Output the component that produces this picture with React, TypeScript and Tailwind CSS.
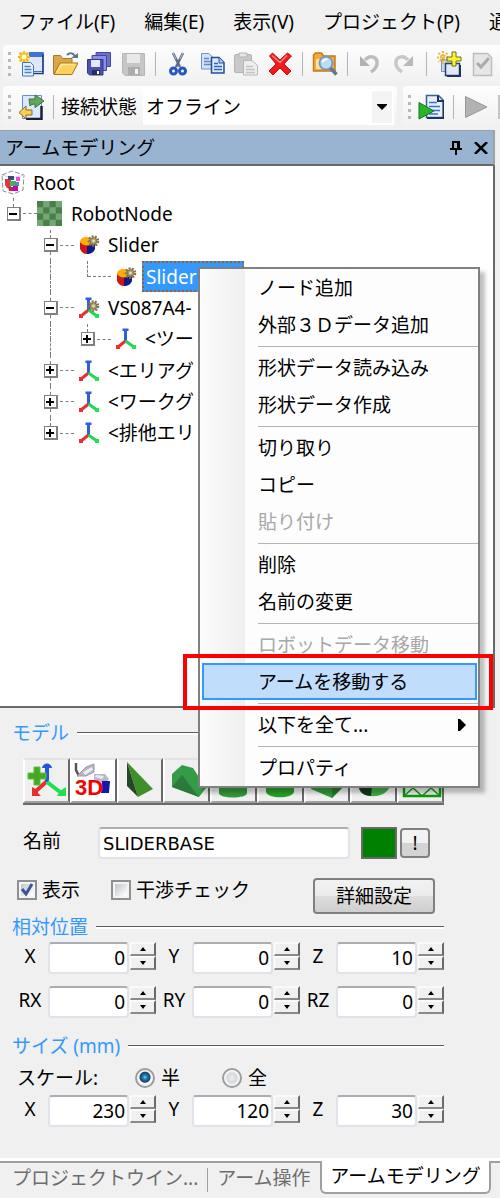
import type { ReactNode } from 'react';

/* ---------- toolbar icons ---------- */

function Svg({ children }: { children: ReactNode }) {
  return (
    <svg width="26" height="26" viewBox="0 0 26 26" className="shrink-0" aria-hidden="true">
      {children}
    </svg>
  );
}

const NewWindowIcon = () => (
  <Svg>
    <rect x="7" y="1.500" width="18" height="19" fill="#dce8fa" stroke="#4a74b8" />
    <path d="M7 1h18.500v5H7z" fill="#3f74d6" />
    <path d="M25 3v19.500H12" fill="none" stroke="#1f3f85" strokeWidth="1.600" />
    <path d="M1 1h10v10H1z" fill="#f7dc7a" />
    <path d="M6 0v12M0 6h12M2 2l8 8M10 2l-8 8" stroke="#efb61f" strokeWidth="1.800" />
    <circle cx="6" cy="6" r="2.500" fill="#fffac8" />
    <path d="M4.500 11.500h8l3 3V25h-11z" fill="#e6effc" stroke="#4673b5" />
    <path d="M6.500 15.500h6M6.500 18.500h7M6.500 21.500h7" stroke="#4f80c4" strokeWidth="1.500" />
  </Svg>
);

const OpenIcon = () => (
  <Svg>
    <path d="M1.500 23V4.500h7l2 3H20V14" fill="#dba646" stroke="#a97c2c" />
    <path d="M2 23.500 8 12h18l-6 11.500z" fill="#ffd05a" stroke="#a97418" />
    <path d="M5 21 9.500 13.500H22" fill="none" stroke="#ffe9a8" strokeWidth="1.500" />
    <path d="M15 4c3-3 7-2 8 2" fill="none" stroke="#5c7391" strokeWidth="2" />
    <path d="M19 7h7V2z" fill="#5c7391" />
  </Svg>
);

const SaveAllIcon = () => (
  <Svg>
    <path d="M10 1.500h14.500v14H10z" fill="#6a70cc" stroke="#4448a4" />
    <path d="M6 4.500h14.500v15H6z" fill="#8a90e0" stroke="#4448a4" />
    <path d="M1.500 8.500H17V24H3.500l-2-2z" fill="#4a50b8" stroke="#34398c" />
    <path d="M5 9h9v7H5z" fill="#e4e9fd" />
    <path d="M6 19h8v5H6z" fill="#2a2f55" />
    <path d="M11 20h2v3h-2z" fill="#fff" />
  </Svg>
);

const SaveIcon = () => (
  <Svg>
    <path d="M2.500 2.500h22v22H5l-2.500-2.500z" fill="#c6c6c6" stroke="#b6b6b6" />
    <path d="M7 3h13v9H7z" fill="#e9e9e9" />
    <path d="M8 16h12v8H8z" fill="#adadad" />
    <path d="M15 18h3v5h-3z" fill="#f5f5f5" />
  </Svg>
);

const CutIcon = () => (
  <Svg>
    <path d="m8 2 7 14M18 2l-7 14" stroke="#5d6d86" strokeWidth="2.600" />
    <path d="m8 2 3 6M18 2l-3 6" stroke="#9fafc4" strokeWidth="1.200" />
    <circle cx="8.500" cy="20" r="3" fill="none" stroke="#2457c4" strokeWidth="3" />
    <circle cx="17.500" cy="20" r="3" fill="none" stroke="#2457c4" strokeWidth="3" />
  </Svg>
);

const CopyIcon = () => (
  <Svg>
    <path d="M2.500 2.500H10l4 4V18H2.500z" fill="#d5e3f8" stroke="#6e93c9" />
    <path d="M5 7.500h5M5 10.500h7M5 13.500h7" stroke="#5f88c6" strokeWidth="1.500" />
    <path d="M12.500 6.500H20l5 5V22H12.500z" fill="#dbe8fd" stroke="#234c9c" strokeWidth="1.500" />
    <path d="M20 6.500V12h5" fill="#b6cbed" stroke="#234c9c" />
    <path d="M15 12.500h4M15 15.500h8M15 18.500h8" stroke="#3565b5" strokeWidth="1.500" />
  </Svg>
);

const PasteIcon = () => (
  <Svg>
    <rect x="1.500" y="3.500" width="17" height="18" rx="1.500" fill="#c9c9c9" stroke="#b4b4b4" />
    <path d="M6 2h8v4H6z" fill="#e6e6e6" stroke="#b4b4b4" />
    <path d="M10.500 9.500H19l5.500 5V24h-14z" fill="#eee" stroke="#b8b8b8" />
    <path d="M13 15.500h7M13 18.500h9M13 21.500h9" stroke="#c2c2c2" strokeWidth="1.500" />
  </Svg>
);

const DeleteIcon = () => (
  <Svg>
    <path d="m2.500 5 3-3 7.500 7 7.500-7 4 3-7.500 8 7 7-4 4-7-7-7 7-4-4 7-7z" fill="#ee1c1c" stroke="#d01010" />
    <path d="m5 4.500 8 7 7-7" fill="none" stroke="#ff8080" strokeWidth="1.500" />
  </Svg>
);

const FindIcon = () => (
  <Svg>
    <path d="M1.500 20V4l2-2h6l2 3H23v15z" fill="#f5a93a" stroke="#c67a12" strokeWidth="1.500" />
    <path d="M4 8h17v10H4z" fill="#ffe2a0" />
    <circle cx="14" cy="12" r="6.500" fill="#bcdcfb" stroke="#7d96b8" strokeWidth="2" />
    <path d="M10.500 11c1-2.500 3.500-3 5-2.500" fill="none" stroke="#fff" strokeWidth="2" />
    <path d="m18.500 17 6 6.500" stroke="#5e7898" strokeWidth="3.500" />
  </Svg>
);

const UndoIcon = () => (
  <Svg>
    <path d="M8 9c5-6 13-3 12 4-.5 4-3 6-6 8" fill="none" stroke="#bdbdbd" strokeWidth="3.500" />
    <path d="M3 5v10h10z" fill="#b0b0b0" />
  </Svg>
);

const RedoIcon = () => (
  <Svg>
    <path d="M17 9C12 3 4 6 5 13c.5 4 3 6 6 8" fill="none" stroke="#c8c8c8" strokeWidth="3.500" />
    <path d="M22 5v10H12z" fill="#b8b8b8" />
  </Svg>
);

const AddItemIcon = () => (
  <Svg>
    <path d="M5.500 8.500h14v12h-14z" fill="#c8d7ee" stroke="#7893bd" />
    <path d="M9.500 12.500h14v12h-14z" fill="#dfe9f7" stroke="#25406f" strokeWidth="1.500" />
    <path d="M24 14v11H11" fill="none" stroke="#1f3358" strokeWidth="2" />
    <path d="M7 0v13M1 6.500h12M2.500 2l9 9M11.500 2l-9 9" stroke="#e8b93a" strokeWidth="2" strokeDasharray="2 1" />
    <path d="M16 1h4v5h5v4h-5v5h-4v-5h-5V6h5z" fill="#fff23a" stroke="#75700f" />
  </Svg>
);

const CheckDocIcon = () => (
  <Svg>
    <path d="M3.500 2.500h14l4 4v18h-18z" fill="#e6e6e6" stroke="#bdbdbd" strokeWidth="1.500" />
    <path d="m7 12 4 4 8-9" fill="none" stroke="#ababab" strokeWidth="3" />
  </Svg>
);

const TransferIcon = () => (
  <Svg>
    <path d="M4.500 1.500h19v23h-19z" fill="#dce9fc" stroke="#6c8fca" />
    <path d="M23.500 12v13H8" fill="none" stroke="#18203a" strokeWidth="2.500" />
    <path d="M11 5h6V1l9 6-9 6.500V10c-3 0-4 1-5 2z" fill="#62a85c" stroke="#3f6e3d" />
    <path d="M14 16H8v-4l-7 6.500L8 25v-4h6z" fill="#f5cf58" stroke="#8d6c1c" />
  </Svg>
);

const RunDocIcon = () => (
  <Svg>
    <path d="M8.500 1.500h12l5 5v17h-17z" fill="#e7f0fd" stroke="#3a5c99" strokeWidth="1.500" />
    <path d="M20 1.500V7h5.500v17H9" fill="none" stroke="#1d3461" strokeWidth="2" />
    <path d="M11 8.500h8M11 12.500h11M11 16.500h11M11 20h9" stroke="#3a6fd8" strokeWidth="1.500" />
    <path d="M1 8.500 16 17 1 25z" fill="#28b428" stroke="#117a16" />
  </Svg>
);

const PlayIcon = () => (
  <Svg>
    <path d="M2.500 2.500 24 13 2.500 23.500z" fill="#b2b2b2" stroke="#989898" />
  </Svg>
);

/* ---------- tree icons ---------- */

const RootIcon = () => (
  <svg width="25" height="25" viewBox="0 0 25 25" aria-hidden="true">
    <path d="M2 5 12 1l12 4-1 15-10 4-10-3z" fill="#fff" stroke="#8f8f8f" strokeDasharray="5 2" />
    <path d="m2 5 10 3 12-3" fill="none" stroke="#d2d2d2" />
    <path d="M5 9h6v9H7l-2-3z" fill="#e3343f" />
    <path d="M8 6h6v4H8z" fill="#3d4a78" />
    <path d="M10 11h6v5h-6z" fill="#3fb55b" />
    <path d="M15 12h4v4h-4z" fill="#4a90a4" />
    <path d="M16 7h4v4h-4z" fill="#e24be6" />
    <path d="M8 17h6v4H9z" fill="#c02648" />
    <path d="M13 16h5v5h-5z" fill="#c800c8" />
  </svg>
);

const FloorIcon = () => (
  <svg width="25" height="25" viewBox="0 0 8 8" aria-hidden="true">
    <path d="M0 0h8v8H0z" fill="#73a873" />
    <path d="M0 0h2v2H0zM4 0h2v2H4zM2 2h2v2H2zM6 2h2v2H6zM0 4h2v2H0zM4 4h2v2H4zM2 6h2v2H2zM6 6h2v2H6z" fill="#4a7f4c" />
  </svg>
);

const Gear = () => (
  <>
    <circle cx="15.500" cy="7" r="4.600" fill="none" stroke="#85754a" strokeWidth="2.400" strokeDasharray="2 1.200" />
    <circle cx="15.500" cy="7" r="3.400" fill="#a8986a" stroke="#85754a" />
    <circle cx="15.500" cy="7" r="1.400" fill="#e9dfb8" />
  </>
);

const PartIcon = () => (
  <svg width="22" height="22" viewBox="0 0 22 22" aria-hidden="true">
    <path d="M2 8v7c1 3 4 5 7 5V10z" fill="#cf1717" />
    <path d="M9 10v10c4 0 7-2 8-5V8z" fill="#161a86" />
    <path d="M2 8c0-5 7-6 10-4l4 5c-2 3-11 4-14-1z" fill="#ffae08" />
    <Gear />
  </svg>
);

const AxesIcon = ({ gear = false }: { gear?: boolean }) => (
  <svg width="22" height="24" viewBox="0 0 22 24" aria-hidden="true">
    <path d="M10.500 2v12" stroke="#2f5fe0" strokeWidth="3" />
    <path d="M8.500 4V2.500h4V4" fill="none" stroke="#2f5fe0" strokeWidth="2" />
    <path d="M10.500 14 3 20" stroke="#e03232" strokeWidth="3" />
    <path d="m10.500 14 8.500 6" stroke="#21d655" strokeWidth="3" />
    <rect x="1" y="18" width="4" height="4" fill="#ec3030" />
    <rect x="17" y="18" width="4" height="4" fill="#21e255" />
    {gear && (
      <g transform="translate(0 3)">
        <Gear />
      </g>
    )}
  </svg>
);

/* ---------- toolbar parts ---------- */

function ToolButton({ label, children }: { label: string; children: ReactNode }) {
  return (
    <button type="button" aria-label={label} className="flex h-9 w-[34px] shrink-0 items-center justify-center">
      {children}
    </button>
  );
}

const Divider = () => (
  <span className="flex w-[11px] shrink-0 justify-center">
    <span className="h-6 w-px bg-[#b4b4b4]" />
  </span>
);

const Grip = () => (
  <span className="flex w-[3px] shrink-0 flex-col gap-1">
    <span className="h-[3px] bg-[#b9b9b9]" />
    <span className="h-[3px] bg-[#b9b9b9]" />
    <span className="h-[3px] bg-[#b9b9b9]" />
    <span className="h-[3px] bg-[#b9b9b9]" />
  </span>
);

/* ---------- tree ---------- */

type Cell = { box?: '+' | '-'; up?: boolean; down?: boolean; branch?: boolean };

const pass: Cell = { up: true, down: true };
const none: Cell = {};

const rows: { cells: Cell[]; icon: ReactNode; text: string; selected?: boolean }[] = [
  { cells: [{ box: '-', up: true, branch: true }], icon: <FloorIcon />, text: 'RobotNode' },
  { cells: [none, { box: '-', up: true, down: true, branch: true }], icon: <PartIcon />, text: 'Slider' },
  { cells: [none, pass, { up: true, branch: true }], icon: <PartIcon />, text: 'Slider', selected: true },
  { cells: [none, { box: '-', up: true, down: true, branch: true }], icon: <AxesIcon gear />, text: 'VS087A4-' },
  { cells: [none, pass, { box: '+', up: true, branch: true }], icon: <AxesIcon />, text: '<ツー' },
  { cells: [none, { box: '+', up: true, down: true, branch: true }], icon: <AxesIcon />, text: '<エリアグ' },
  { cells: [none, { box: '+', up: true, down: true, branch: true }], icon: <AxesIcon />, text: '<ワークグ' },
  { cells: [none, { box: '+', up: true, branch: true }], icon: <AxesIcon />, text: '<排他エリ' },
];

function TreeCell({ cell }: { cell: Cell }) {
  return (
    <span className="flex w-[37px] shrink-0 items-stretch pl-[6px]">
      <span className="flex w-[15px] flex-col items-center">
        <span className={cell.up ? 'flex-1 border-l border-dashed border-[#7c7c7c]' : 'flex-1'} />
        {cell.box && (
          <button
            type="button"
            aria-label={cell.box === '+' ? '展開' : '折りたたみ'}
            className="flex size-[14px] items-center justify-center border border-r-2 border-b-2 border-[#808080] bg-white"
          >
            <svg width="8" height="8" viewBox="0 0 8 8" aria-hidden="true">
              <path d={cell.box === '+' ? 'M0 3h8v2H0zM3 0h2v8H3z' : 'M0 3h8v2H0z'} fill="#000" />
            </svg>
          </button>
        )}
        <span className={cell.down ? 'flex-1 border-l border-dashed border-[#7c7c7c]' : 'flex-1'} />
      </span>
      {cell.branch && (
        <span
          className={
            cell.box
              ? 'ml-[2px] flex-1 self-center border-t border-dashed border-[#7c7c7c]'
              : '-ml-[7px] flex-1 self-center border-t border-dashed border-[#7c7c7c]'
          }
        />
      )}
    </span>
  );
}

function Tree() {
  return (
    <ul className="grid h-[282px] auto-rows-fr">
      <li className="flex items-center gap-2">
        <RootIcon />
        <span>Root</span>
      </li>
      {rows.map((row, i) => (
        <li key={i} className="flex items-stretch whitespace-nowrap">
          {row.cells.map((cell, j) => (
            <TreeCell key={j} cell={cell} />
          ))}
          <span className={row.cells.length === 1 ? 'flex w-[31px] shrink-0 items-center' : 'flex w-[31px] shrink-0 items-center pl-[4px]'}>{row.icon}</span>
          <span
            className={
              row.selected
                ? 'flex w-[102px] items-center border-2 border-dotted border-[#a85c10] bg-[#3399ff] pl-[2px] text-white'
                : 'flex items-center pl-[3px]'
            }
          >
            {row.text}
          </span>
        </li>
      ))}
    </ul>
  );
}

/* ---------- context menu ---------- */

type Entry = { text: string; disabled?: boolean; active?: boolean; submenu?: boolean };

const groups: Entry[][] = [
  [{ text: 'ノード追加' }, { text: '外部３Ｄデータ追加' }],
  [{ text: '形状データ読み込み' }, { text: '形状データ作成' }],
  [{ text: '切り取り' }, { text: 'コピー' }, { text: '貼り付け', disabled: true }],
  [{ text: '削除' }, { text: '名前の変更' }],
  [{ text: 'ロボットデータ移動', disabled: true }, { text: 'アームを移動する', active: true }],
  [{ text: '以下を全て...', submenu: true }],
  [{ text: 'プロパティ' }],
];

function MenuItem({ entry }: { entry: Entry }) {
  return (
    <button
      type="button"
      role="menuitem"
      disabled={entry.disabled}
      className={
        entry.active
          ? 'relative mr-px ml-[2px] flex h-[37px] items-center border-2 border-[#3399ff] bg-[#c0ddfc] pl-[54px]'
          : entry.disabled
            ? 'flex h-[37px] items-center pl-[58px] text-[#a8a8a8]'
            : 'flex h-[37px] items-center pl-[58px]'
      }
    >
      {entry.text}
      {entry.submenu && (
        <svg width="8" height="12" viewBox="0 0 8 12" className="mr-3 ml-auto" aria-hidden="true">
          <path d="M0 0h2l6 6-6 6H0z" fill="#000" />
        </svg>
      )}
      {entry.active && <span className="absolute -top-[11px] -right-[18px] -bottom-[12px] -left-[21px] border-4 border-[#ff0000]" />}
    </button>
  );
}

function ContextMenu() {
  return (
    <div
      role="menu"
      className="absolute top-[267px] left-[198px] w-[282px] border-2 border-[#808080] bg-[linear-gradient(to_right,#fcfcfc_0,#efefef_45px,#fdfdfd_45px)] shadow-[5px_5px_4px_rgba(0,0,0,0.25)]"
    >
      {groups.map((group, i) => (
        <div key={i} className="flex flex-col">
          {i > 0 && <div role="separator" className="mt-[3px] mb-[2px] ml-[58px] h-px bg-[#b4b4b4]" />}
          {group.map((entry) => (
            <MenuItem key={entry.text} entry={entry} />
          ))}
        </div>
      ))}
    </div>
  );
}

/* ---------- form ---------- */

function Legend({ children }: { children: ReactNode }) {
  return (
    <div className="flex h-5 items-center gap-2 text-[#3399ff]">
      <h2 className="whitespace-nowrap">{children}</h2>
      <span className="h-[3px] flex-1 border-t border-[#5c5c5c] bg-white" />
    </div>
  );
}

function Spin({ up }: { up?: boolean }) {
  return (
    <button
      type="button"
      aria-label={up ? '増やす' : '減らす'}
      className="flex h-[14px] items-center justify-center border-t-2 border-r-2 border-b-2 border-l border-t-[#fafafa] border-r-[#696969] border-b-[#8a8a8a] border-l-white bg-[#f0f0f0]"
    >
      <svg width="6" height="4" viewBox="0 0 6 4" aria-hidden="true">
        <path d={up ? 'M0 4 3 0l3 4z' : 'M0 0h6L3 4z'} fill="#000" />
      </svg>
    </button>
  );
}

function NumberField({ label, id, value }: { label: string; id: string; value: string }) {
  return (
    <div className="flex items-start">
      <label htmlFor={id} className="flex h-7 w-9 shrink-0 items-center justify-center">
        {label}
      </label>
      <input
        id={id}
        defaultValue={value}
        inputMode="numeric"
        className="h-8 min-w-0 flex-1 rounded-sm border-2 border-[#e2e3ea] border-t-[#abadb3] bg-white pr-[2px] text-right"
      />
      <div className="flex w-[27px] shrink-0 flex-col pl-px">
        <Spin up />
        <Spin />
      </div>
    </div>
  );
}

function Glyph({ children }: { children: ReactNode }) {
  return (
    <svg width="42" height="42" viewBox="0 0 42 42" className="shrink-0" aria-hidden="true">
      {children}
    </svg>
  );
}

const shapes: { label: string; art: ReactNode; white?: boolean }[] = [
  {
    label: 'ノード追加',
    art: (
      <Glyph>
        <path d="M22 7v15" stroke="#2457d6" strokeWidth="4" />
        <path d="M17 8c1-6 9-6 10 0z" fill="#2457d6" />
        <path d="M21 22 11 31" stroke="#e53030" strokeWidth="4" />
        <path d="M7 27v9h9l-3-3v-3z" fill="#e53030" />
        <path d="m22 22 13 10" stroke="#1fe04f" strokeWidth="4" />
        <path d="M41 27v9h-9l3-5z" fill="#1fe04f" />
        <path d="M9 7h6v6h6v6h-6v6H9v-6H3v-6h6z" fill="#45a828" stroke="#5fc23c" />
      </Glyph>
    ),
  },
  {
    label: '3Dデータ追加',
    white: true,
    art: (
      <Glyph>
        <path d="M4 3v7l3 6" fill="none" stroke="#555" strokeWidth="2.500" />
        <path d="m5 16 9-9 8-3v8l-8 4z" fill="#b4b4c2" stroke="#9a9aa8" />
        <path d="m11 12 9-5 1 3-8 5z" fill="#ececf4" />
        <path d="M22 14h11l4 5-3 4-12-3z" fill="#b9b9c8" />
        <path d="m24 15 8 1-2 3-7-2z" fill="#ebebf3" />
        <path d="M30 21h8l-1 12h-8z" fill="#1717a6" />
        <text x="3" y="35" fontFamily="Liberation Sans, sans-serif" fontSize="22" fontWeight="700" fill="#f40000">
          3D
        </text>
      </Glyph>
    ),
  },
  {
    label: '三角錐',
    art: (
      <Glyph>
        <path d="M8 2 34 29 19 37z" fill="#3d8f28" />
        <path d="M8 2v24l11 11z" fill="#24472a" />
      </Glyph>
    ),
  },
  {
    label: '三角柱',
    art: (
      <Glyph>
        <path d="M6 14 16 5l11 3 13 20-7 9-27-10z" fill="#349b47" />
        <path d="m6 27 10-12 17 22z" fill="#2b7a3c" />
      </Glyph>
    ),
  },
  {
    label: '円柱',
    art: (
      <Glyph>
        <path d="M7 10v23c0 6 28 6 28 0V10z" fill="#349b38" />
        <ellipse cx="21" cy="10" rx="14" ry="4" fill="#5bc45f" />
      </Glyph>
    ),
  },
  {
    label: '球',
    art: (
      <Glyph>
        <path d="M7 12v20c2 7 26 7 28 0V12C35 4 7 4 7 12z" fill="#28a128" />
      </Glyph>
    ),
  },
  {
    label: '直方体',
    art: (
      <Glyph>
        <path d="M5 12 21 5l16 7v15L26 38 5 29z" fill="#349b38" />
        <path d="m26 20 11-8v15L26 38z" fill="#277a2c" />
      </Glyph>
    ),
  },
  {
    label: '円錐',
    art: (
      <Glyph>
        <path d="M21 4 6 28c3 11 25 11 30 0z" fill="#3fae45" />
        <path d="M21 4 6 28c1 5 6 8 12 8z" fill="#14381b" />
      </Glyph>
    ),
  },
  {
    label: 'メッシュ',
    art: (
      <Glyph>
        <path d="M4 5h36v31H4z" fill="none" stroke="#0a9a0a" strokeWidth="2.500" />
        <path d="m4 36 9-8 9 8 9-8 9 8M4 20h36" fill="none" stroke="#0a9a0a" strokeWidth="1.500" />
      </Glyph>
    ),
  },
];

function CheckBox({ id, label, checked }: { id: string; label: string; checked?: boolean }) {
  return (
    <span className="flex h-6 items-center gap-[5px] whitespace-nowrap">
      <span className="grid size-5 place-items-center">
        <input
          id={id}
          type="checkbox"
          defaultChecked={checked}
          className="peer col-start-1 row-start-1 size-5 appearance-none border-2 border-[#8e8f8f] bg-[linear-gradient(135deg,#c6cbd2_20%,#fbfbfb_80%)] outline-2 -outline-offset-4 outline-[#f4f4f4]"
        />
        <svg width="14" height="14" viewBox="0 0 14 14" className="pointer-events-none z-10 col-start-1 row-start-1 hidden peer-checked:block" aria-hidden="true">
          <path d="m2 6 4 5 6-10" fill="none" stroke="#3d5299" strokeWidth="3" />
        </svg>
      </span>
      <label htmlFor={id}>{label}</label>
    </span>
  );
}

function Radio({ id, label, checked }: { id: string; label: string; checked?: boolean }) {
  return (
    <span className="flex items-center gap-[6px]">
      <input
        id={id}
        type="radio"
        name="scale"
        defaultChecked={checked}
        className="size-5 appearance-none rounded-full border-2 border-[#9b9d9d] bg-[radial-gradient(circle,#e9edf0_0,#d5d9dd_5px,#f8f8f8_7px)] checked:bg-[radial-gradient(circle_at_50%_45%,#7fd4f5_0,#1c86b8_2px,#163f66_5px,#f4f4f4_6px)]"
      />
      <label htmlFor={id}>{label}</label>
    </span>
  );
}

/* ---------- page ---------- */

export default function App() {
  return (
    <div className="relative overflow-hidden bg-[#f0f0f0] font-['Noto_Sans','Noto_Sans_CJK_JP',sans-serif] text-[19px] leading-6 text-black">
      <nav className="flex h-[45px] items-center gap-[29px] overflow-hidden pb-[2px] pl-[18px] whitespace-nowrap">
        <button type="button" className="shrink-0">ファイル(F)</button>
        <button type="button" className="shrink-0">編集(E)</button>
        <button type="button" className="shrink-0">表示(V)</button>
        <button type="button" className="shrink-0">プロジェクト(P)</button>
        <button type="button" className="shrink-0">通信(C)</button>
      </nav>

      <div className="ml-[3px] flex h-[38px] items-center gap-[3px] overflow-hidden rounded-l-sm bg-linear-to-b from-[#fdfdfd] to-[#f1f1f1] pl-[5px]">
        <Grip />
        <div className="flex items-center">
          <ToolButton label="新規作成"><NewWindowIcon /></ToolButton>
          <ToolButton label="開く"><OpenIcon /></ToolButton>
          <ToolButton label="すべて保存"><SaveAllIcon /></ToolButton>
          <ToolButton label="保存"><SaveIcon /></ToolButton>
          <Divider />
          <ToolButton label="切り取り"><CutIcon /></ToolButton>
          <ToolButton label="コピー"><CopyIcon /></ToolButton>
          <ToolButton label="貼り付け"><PasteIcon /></ToolButton>
          <ToolButton label="削除"><DeleteIcon /></ToolButton>
          <Divider />
          <ToolButton label="検索"><FindIcon /></ToolButton>
          <Divider />
          <ToolButton label="元に戻す"><UndoIcon /></ToolButton>
          <ToolButton label="やり直し"><RedoIcon /></ToolButton>
          <Divider />
          <ToolButton label="追加"><AddItemIcon /></ToolButton>
          <ToolButton label="チェック"><CheckDocIcon /></ToolButton>
        </div>
      </div>

      <div className="mt-[3px] flex h-[42px] gap-[6px] overflow-hidden pl-[3px]">
        <div className="flex min-w-0 flex-1 items-center gap-[3px] rounded-sm bg-linear-to-b from-[#fdfdfd] to-[#f1f1f1] pr-[3px] pl-[5px]">
          <Grip />
          <div className="flex min-w-0 flex-1 items-center">
            <ToolButton label="転送"><TransferIcon /></ToolButton>
            <Divider />
            <label htmlFor="status" className="shrink-0 pr-[6px] pl-[2px] whitespace-nowrap">接続状態</label>
            <div className="relative min-w-0 flex-1">
              <select id="status" className="h-9 w-full appearance-none bg-white pl-[3px] leading-6">
                <option>オフライン</option>
              </select>
              <span className="pointer-events-none absolute inset-y-[2px] right-[2px] flex w-5 items-center justify-center bg-[#f4f4f4]">
                <svg width="10" height="6" viewBox="0 0 10 6" aria-hidden="true">
                  <path d="M0 0h10v1L5 6 0 1z" fill="#000" />
                </svg>
              </span>
            </div>
          </div>
        </div>
        <div className="flex w-[97px] shrink-0 items-center gap-[3px] overflow-hidden rounded-l-sm bg-linear-to-b from-[#fdfdfd] to-[#f1f1f1] pl-[5px]">
          <Grip />
          <div className="flex items-center">
            <ToolButton label="実行"><RunDocIcon /></ToolButton>
            <Divider />
            <ToolButton label="再生"><PlayIcon /></ToolButton>
            <span className="ml-[5px] h-6 w-4 shrink-0 bg-[#c4c4c4]" />
          </div>
        </div>
      </div>

      <main className="mt-[2px] mr-[5px]">
        <header className="flex h-[36px] items-center border-t border-r-2 border-b-2 border-[#a0a0a0] border-b-[#696969] bg-[#99b4d1] pl-[5px]">
          <h1 className="flex-1">アームモデリング</h1>
          <button type="button" aria-label="固定" className="mr-3">
            <svg width="12" height="15" viewBox="0 0 12 15" aria-hidden="true">
              <path d="M3 8V2h6v6M0 9h12M6 9v6M8 2v7" fill="none" stroke="#000" strokeWidth="2" />
            </svg>
          </button>
          <button type="button" aria-label="閉じる" className="mr-[5px]">
            <svg width="14" height="12" viewBox="0 0 14 12" aria-hidden="true">
              <path d="m1 0 12 12M13 0 1 12" stroke="#000" strokeWidth="2.500" />
            </svg>
          </button>
        </header>

        <section className="border-r-2 border-b-2 border-[#696969] bg-white pt-px pb-[257px]">
          <Tree />
        </section>

        <form className="mr-[51px] pt-[15px] pb-[31px] pl-3" onSubmit={(e) => e.preventDefault()}>
          <Legend>モデル</Legend>
          <div className="mt-[15px] ml-[11px] grid h-[47px] grid-cols-9 border-b-2 border-[#696969]">
            {shapes.map((shape) => (
              <button
                key={shape.label}
                type="button"
                aria-label={shape.label}
                className={
                  shape.white
                    ? 'flex items-center justify-center overflow-hidden border-2 border-t-[#e3e3e3] border-r-[#696969] border-b-[#a0a0a0] border-l-white bg-white'
                    : 'flex items-center justify-center overflow-hidden border-2 border-t-[#e3e3e3] border-r-[#696969] border-b-[#a0a0a0] border-l-white bg-[#f0f0f0]'
                }
              >
                {shape.art}
              </button>
            ))}
          </div>

          <div className="mt-[22px] flex h-8 items-start pl-[11px]">
            <label htmlFor="name" className="w-[75px] shrink-0 leading-7">名前</label>
            <input
              id="name"
              defaultValue="SLIDERBASE"
              className="h-8 min-w-0 flex-1 rounded-sm border-2 border-[#e2e3ea] border-t-[#abadb3] bg-white pl-[3px] font-['DejaVu_Sans',sans-serif] text-[18px]"
            />
            <button type="button" aria-label="色" className="ml-[11px] h-8 w-9 border-2 border-[#696969] bg-[#008000]" />
            <button type="button" className="mt-px mr-[14px] ml-[3px] h-[30px] w-[30px] rounded-sm border-2 border-[#808080] bg-linear-to-b from-[#f2f2f2] from-50% to-[#d4d4d4] to-50%">
              !
            </button>
          </div>

          <div className="mt-[19px] flex h-9 items-start pl-[5px]">
            <CheckBox id="visible" label="表示" checked />
            <span className="w-[31px] shrink-0" />
            <CheckBox id="clash" label="干渉チェック" />
            <button type="button" className="mr-[9px] ml-auto h-9 w-[122px] rounded-sm border-2 border-[#808080] bg-[linear-gradient(to_bottom,#f2f2f2,#ebebeb_50%,#dddddd_50%,#cfcfcf)]">
              詳細設定
            </button>
          </div>

          <div className="mt-[3px]">
            <Legend>相対位置</Legend>
          </div>
          <div className="mt-[5px] grid grid-cols-3 gap-y-3">
            <NumberField id="px" label="X" value="0" />
            <NumberField id="py" label="Y" value="0" />
            <NumberField id="pz" label="Z" value="10" />
            <NumberField id="rx" label="RX" value="0" />
            <NumberField id="ry" label="RY" value="0" />
            <NumberField id="rz" label="RZ" value="0" />
          </div>

          <div className="mt-[18px]">
            <Legend>サイズ (mm)</Legend>
          </div>
          <div className="mt-[10px] flex h-6 items-center pl-[5px]">
            <span className="w-[118px]">スケール:</span>
            <Radio id="half" label="半" checked />
            <span className="w-[42px]" />
            <Radio id="full" label="全" />
          </div>
          <div className="mt-[5px] grid grid-cols-3">
            <NumberField id="sx" label="X" value="230" />
            <NumberField id="sy" label="Y" value="120" />
            <NumberField id="sz" label="Z" value="30" />
          </div>
        </form>
      </main>

      <footer className="flex h-10 items-start border-t-3 border-white whitespace-nowrap">
        <div className="flex h-[32px] min-w-0 flex-1 items-center border-t-2 border-[#a0a0a0] text-[#6d6d6d]">
          <button type="button" className="pl-3">プロジェクトウイン...</button>
          <span className="mx-[9px] mt-1 h-6 w-px bg-[#a0a0a0]" />
          <button type="button">アーム操作</button>
        </div>
        <button type="button" className="h-[33px] w-[171px] shrink-0 rounded-b-md border-x-2 border-b-2 border-[#a0a0a0] bg-white pb-[2px]">
          アームモデリング
        </button>
        <span className="w-[9px] shrink-0 border-t-2 border-[#a0a0a0]" />
      </footer>

      <ContextMenu />
    </div>
  );
}
